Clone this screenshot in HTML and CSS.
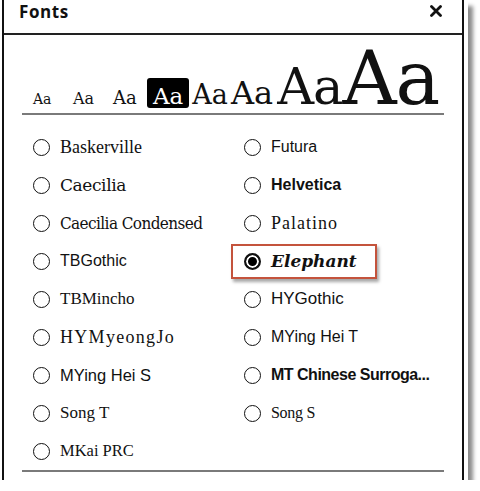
FILE: index.html
```html
<!DOCTYPE html>
<html lang="en">
<head>
    <meta charset="UTF-8">
    <meta name="viewport" content="width=device-width, initial-scale=1.0">
    <title>Fonts</title>
    <link rel="stylesheet" href="styles.css">
</head>
<body>
    <div class="panel">

        <div class="header">
            <span class="title">Fonts</span>
            <svg class="close" width="12" height="12" viewBox="0 0 12 12">
                <path d="M1.5 1.5 L10.5 10.5 M10.5 1.5 L1.5 10.5" stroke="#111" stroke-width="2.8" stroke-linecap="round"/>
            </svg>
        </div>

        <div class="sizes">
            <span class="size s1">Aa</span>
            <span class="size s2">Aa</span>
            <span class="size s3">Aa</span>
            <span class="size s4 current">Aa</span>
            <span class="size s5">Aa</span>
            <span class="size s6">Aa</span>
            <span class="size s7">Aa</span>
            <span class="size s8">Aa</span>
        </div>

        <div class="list">
            <div class="option"><span class="radio"></span><span class="name f-baskerville">Baskerville</span></div>
            <div class="option"><span class="radio"></span><span class="name f-caecilia">Caecilia</span></div>
            <div class="option"><span class="radio"></span><span class="name f-condensed">Caecilia Condensed</span></div>
            <div class="option"><span class="radio"></span><span class="name f-tbgothic">TBGothic</span></div>
            <div class="option"><span class="radio"></span><span class="name f-tbmincho">TBMincho</span></div>
            <div class="option"><span class="radio"></span><span class="name f-myeongjo">HYMyeongJo</span></div>
            <div class="option"><span class="radio"></span><span class="name f-heis">MYing Hei S</span></div>
            <div class="option"><span class="radio"></span><span class="name f-songt">Song T</span></div>
            <div class="option"><span class="radio"></span><span class="name f-mkai">MKai PRC</span></div>

            <div class="option"><span class="radio"></span><span class="name f-futura">Futura</span></div>
            <div class="option"><span class="radio"></span><span class="name f-helvetica">Helvetica</span></div>
            <div class="option"><span class="radio"></span><span class="name f-palatino">Palatino</span></div>
            <div class="option selected"><span class="radio on"></span><span class="name f-elephant">Elephant</span></div>
            <div class="option"><span class="radio"></span><span class="name f-hygothic">HYGothic</span></div>
            <div class="option"><span class="radio"></span><span class="name f-heit">MYing Hei T</span></div>
            <div class="option"><span class="radio"></span><span class="name f-surrogate">MT Chinese Surroga...</span></div>
            <div class="option"><span class="radio"></span><span class="name f-songs">Song S</span></div>
        </div>

    </div>
</body>
</html>
```

FILE: styles.css
```css
body{
    margin: 0px;
    background-color: white;
    color: #111;
    font-family: 'Liberation Serif', serif;
}
.panel{
    width: 458px;
    height: 480px;
    margin-left: 2px;
    border-left: 2px solid #111;
    border-right: 2px solid #111;
    background-color: white;
    box-shadow: 4px 0 0 #fff, 9px 6px 4px rgba(0, 0, 0, 0.45);
}
.header{
    height: 33px;
    border-bottom: 2px solid #222;
    display: flex;
    justify-content: space-between;
    align-items: flex-start;
    padding: 0 20px 0 15px;
}
.title{
    font-family: 'Open Sans', sans-serif;
    font-weight: bold;
    font-size: 17px;
    line-height: 24px;
    letter-spacing: 0.6px;
}
.close{
    margin-top: 5px;
}
.sizes{
    height: 80px;
    box-sizing: border-box;
    margin: 0 18px;
    padding: 6px 0 0 5px;
    border-bottom: 2px solid #7a7a7a;
    display: flex;
    align-items: baseline;
    font-family: 'DejaVu Serif', serif;
    line-height: 1;
}
.size{
    padding: 0 0 0 6px;
}
.s1, .s2, .s3{
    width: 40px;
    box-sizing: border-box;
}
.s1{ font-size: 14px; }
.s2{ font-size: 16px; }
.s3{ font-size: 18px; }
.s4{ font-size: 23px; }
.s5{ font-size: 27px; padding-left: 3px; }
.s6{ font-size: 32px; padding-left: 3px; }
.s7{ font-size: 51px; padding-left: 4px; letter-spacing: -1px; }
.s8{ font-size: 75px; padding-left: 0; letter-spacing: -1px; }
.current{
    background-color: #000;
    color: white;
    border-radius: 3px;
    padding: 7px 6px 0px 6px;
}
.list{
    margin: 0 18px;
    padding: 13px 0 0 11px;
    border-bottom: 2px solid #7a7a7a;
    display: grid;
    grid-template-columns: 211px 1fr;
    grid-template-rows: repeat(9, 38px);
    grid-auto-flow: column;
    align-items: center;
}
.option{
    display: flex;
    align-items: center;
    gap: 10px;
    white-space: nowrap;
}
.radio{
    width: 17px;
    height: 17px;
    box-sizing: border-box;
    border: 1.7px solid #111;
    border-radius: 50%;
    flex: none;
}
.radio.on{
    border-width: 2px;
    background-color: #000;
    box-shadow: inset 0 0 0 2px white;
}
.selected{
    justify-self: start;
    margin-left: -13px;
    height: 35px;
    box-sizing: border-box;
    padding: 0 18px 0 11px;
    border: 2px solid #c4533c;
    box-shadow: 2px 3px 3px rgba(0, 0, 0, 0.35);
}
.name{
    font-size: 17px;
}
.f-baskerville{ font-size: 18px; }
.f-caecilia{ font-family: 'DejaVu Serif', serif; font-size: 17px; letter-spacing: -0.4px; }
.f-condensed{ font-family: 'DejaVu Serif', serif; font-stretch: condensed; font-size: 17px; letter-spacing: -0.6px; }
.f-tbgothic{ font-family: 'Liberation Sans', sans-serif; font-size: 16px; }
.f-tbmincho{ font-size: 17px; }
.f-myeongjo{ font-size: 18px; letter-spacing: 1.3px; }
.f-heis{ font-family: 'Liberation Sans', sans-serif; font-size: 16.5px; }
.f-songt{ font-size: 17px; }
.f-mkai{ font-size: 16.5px; }
.f-futura{ font-family: 'Liberation Sans', sans-serif; font-size: 16px; }
.f-helvetica{ font-family: 'Liberation Sans', sans-serif; font-weight: bold; font-size: 16px; }
.f-palatino{ font-size: 18px; letter-spacing: 1px; }
.f-elephant{ font-family: 'DejaVu Serif', serif; font-weight: bold; font-style: italic; font-size: 17px; }
.f-hygothic{ font-family: 'Liberation Sans', sans-serif; font-size: 17px; }
.f-heit{ font-family: 'Liberation Sans', sans-serif; font-size: 16px; }
.f-surrogate{ font-family: 'Liberation Sans', sans-serif; font-weight: bold; font-size: 16px; letter-spacing: -0.5px; }
.f-songs{ font-size: 16px; letter-spacing: -0.3px; }
```
